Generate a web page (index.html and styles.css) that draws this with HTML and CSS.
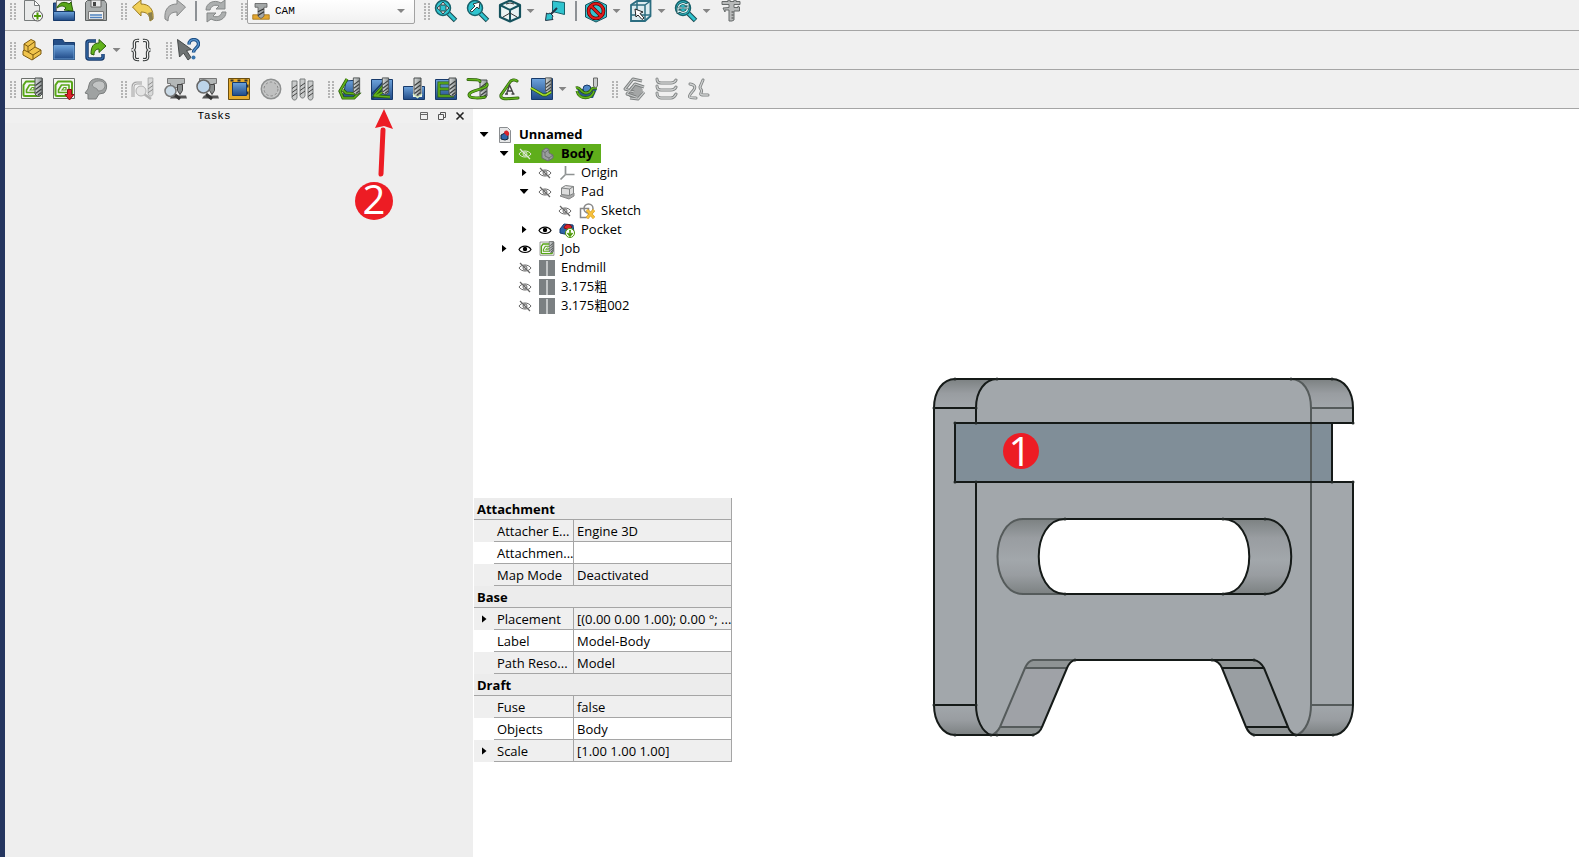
FILE: index.html
```html
<!DOCTYPE html>
<html lang="en">
<head>
<meta charset="utf-8">
<title>Unnamed - CAM</title>
<link rel="stylesheet" href="styles.css">
</head>
<body>
<svg class="defs" aria-hidden="true">
  <defs>
    <linearGradient id="blue" x1="0" y1="0" x2="0" y2="1"><stop offset="0" stop-color="#6da3dc"/><stop offset="1" stop-color="#204a87"/></linearGradient>
    <linearGradient id="steel" x1="0" y1="0" x2="1" y2="0"><stop offset="0" stop-color="#d8dcdc"/><stop offset="1" stop-color="#8f9494"/></linearGradient>
    <linearGradient id="shadeTop" x1="0" y1="0" x2="0" y2="1"><stop offset="0" stop-color="#7c8182"/><stop offset=".5" stop-color="#999da1"/><stop offset="1" stop-color="#a2a7ab"/></linearGradient>
    <linearGradient id="shadeBottom" x1="0" y1="0" x2="0" y2="1"><stop offset="0" stop-color="#a2a7ab"/><stop offset=".5" stop-color="#999da1"/><stop offset="1" stop-color="#7c8182"/></linearGradient>
    <linearGradient id="shadeSlot" x1="0" y1="0" x2="0" y2="1"><stop offset="0" stop-color="#7c8182"/><stop offset=".25" stop-color="#999da1"/><stop offset=".55" stop-color="#a2a7ab"/><stop offset=".75" stop-color="#999da1"/><stop offset="1" stop-color="#7c8182"/></linearGradient>
  </defs>
  <symbol id="mill" viewBox="0 0 9 20">
    <path d="M1 1h7v16l-2 2H3l-2-2z" fill="url(#steel)" stroke="#4a4e4e"/>
    <path d="M1.500 8.500 7.500 4M1.500 12.500 7.500 8M1.500 16.500 7.500 12M4 18l3.500-2.500" stroke="#3c4040" stroke-width="1.200"/>
  </symbol>
  <symbol id="millGray" viewBox="0 0 7 21">
    <path d="M1 1h5v17l-1.500 2h-2L1 18z" fill="#c9cbcb" stroke="#7b7e7e"/>
    <path d="M1 8.500 6 5M1 12.500 6 9M1 16.500 6 13" stroke="#444"/>
  </symbol>
  <symbol id="job" viewBox="0 0 24 24">
    <path d="M1.500 1.500h21v20h-21z" fill="#f4f4f2" stroke="#6c706c"/>
    <path d="M6 4.500h12.500q1.500 0 1.500 1.500v11.500q0 1.500-1.500 1.500H5q-1.500 0-1.500-1.500V8z" fill="none" stroke="#58a618" stroke-width="2" stroke-linejoin="round"/>
    <path d="M9.500 8h7.500v7.500H6.500V13z" fill="none" stroke="#58a618" stroke-width="1.600" stroke-linejoin="round"/>
    <path d="m10 13 2-2.500h2V13z" fill="none" stroke="#58a618" stroke-width="1.200"/>
  </symbol>
  <symbol id="lens" viewBox="0 0 24 24">
    <path d="m14.500 14.500 7 7" stroke="#16474e" stroke-width="5"/>
    <path d="m14.500 14.500 6.500 6.500" stroke="#2fc4cf" stroke-width="3"/>
    <circle cx="9" cy="9" r="7.500" fill="#2fc4cf" stroke="#16616b" stroke-width="1.500"/>
  </symbol>
  <symbol id="scope" viewBox="0 0 24 24">
    <path d="M4.500 1.500h17v5h-3v4h-11v-4h-3z" fill="#b4b8b8" stroke="#777"/>
    <path d="M14.500 7.500h5v6l-2.500 4-2.500-4z" fill="#8a8e8e" stroke="#444"/>
    <path d="M9 18.500h14l1 3H7z" fill="#555"/>
    <path d="m11 17 6 5" stroke="#333" stroke-width="3"/>
  </symbol>
  <symbol id="eye" viewBox="0 0 14 12">
    <path d="M1 6.500C3.500 2 10.500 2 13 6.500 10.500 10.500 3.500 10.500 1 6.500z" fill="#fff" stroke="#000" stroke-width="1.200"/>
    <circle cx="7" cy="6" r="2.200"/>
  </symbol>
  <symbol id="eyeOff" viewBox="0 0 14 12">
    <path d="M1 6C3.500 2 10.500 2 13 6 10.500 10 3.500 10 1 6z" fill="none" stroke="currentColor"/>
    <circle cx="7" cy="6" r="2" fill="none" stroke="currentColor"/>
    <path d="m2 1 10 10" stroke="currentColor" stroke-width="1.200"/>
  </symbol>
  <symbol id="endmill" viewBox="0 0 16 16">
    <path d="M0 0h16v16H0z" fill="#7b8082"/><path d="M7 1h2v15H7z" fill="#c3c6c7"/>
  </symbol>
</svg>

<div class="app">
<header class="toolbars">
  <div class="toolbar">
    <span class="grip"></span>
    <button class="tool" aria-label="New"><svg viewBox="0 0 24 24"><path d="M4.500 1.500h10l5 5v15h-15z" fill="#e9eaea" stroke="#777b7b"/><path d="M14.500 1.500v5h5z" fill="#fff" stroke="#777b7b"/><circle cx="17.500" cy="17" r="5" fill="#f6f6f6" stroke="#555"/><path d="M17.500 13.500v7M14 17h7" stroke="#4e9a06" stroke-width="2"/></svg></button>
    <button class="tool" aria-label="Open"><svg viewBox="0 0 24 24"><path d="M1.500 4h3v17h-3z" fill="#2a5590" stroke="#173a6b"/><path d="M4.500 1.500h15v12h-15z" fill="#eee" stroke="#777"/><path d="M1.500 12.500h21v9h-21z" fill="url(#blue)" stroke="#173a6b"/><path d="M5 9c2-6 8-7 12-4l2-2 2 9-9-1 2-2c-3-3-6-2-9 0z" fill="#58a618" stroke="#2b5d0a"/></svg></button>
    <button class="tool" aria-label="Save"><svg viewBox="0 0 24 24"><path d="M3.500 1.500h17l2 3v17h-21v-18z" fill="#a9adad" stroke="#5d6161"/><path d="M7 1h10v7H7z" fill="#e8e8e8" stroke="#666"/><path d="M9 3h3v4H9z" fill="#444"/><path d="M4.500 12.500h15v8h-15z" fill="#f1f1f1" stroke="#777"/><path d="M6 16h12M6 18.500h12" stroke="#4f82c0" stroke-width="1.500"/></svg></button>
    <span class="grip"></span>
    <button class="tool" aria-label="Undo"><svg viewBox="0 0 24 24"><path d="M1.500 8 10 1v4c8 0 13 5 12 15l-3 2c0-6-3-9-9-9v4z" fill="#f0cf58" stroke="#9b7a20"/><path d="m17 14 2 8 3-2-1-7z" fill="#8b8150"/></svg></button>
    <button class="tool" aria-label="Redo"><svg viewBox="0 0 24 24"><path d="M22.500 8 14 1v4C6 5 1 10 2 20l3 2c0-6 3-9 9-9v4z" fill="#b5b6b6" stroke="#868888"/></svg></button>
    <span class="divider"></span>
    <button class="tool" aria-label="Refresh"><svg viewBox="0 0 24 24"><path d="M2 11C2 4 10 0 17 4l4-3v9h-9l3-3c-4-2-8 0-9 4zM22 13c0 7-8 11-15 7l-4 3v-9h9l-3 3c4 2 8 0 9-4z" fill="#acafaf" stroke="#858888"/></svg></button>
    <span class="grip"></span>
    <div class="combo">
      <svg viewBox="0 0 24 24" aria-hidden="true"><path d="M1 17h22v6H1z" fill="#e3a72f" stroke="#9b6c11"/><path d="M4 2h16v5h-4v12l-4 3-4-3V7H4z" fill="#a4a8a8" stroke="#555"/><path d="m8 13 8-4M8 18l8-5" stroke="#333" stroke-width="1.500"/></svg>
      <select aria-label="Workbench"><option>CAM</option></select>
      <span class="caret"></span>
    </div>
    <span class="grip"></span>
    <button class="tool" aria-label="Fit all"><svg viewBox="0 0 24 24"><use href="#lens"/><path d="m9 3 2.500 3h-5zM9 15l2.500-3h-5zM3 9l3-2.500v5zM15 9l-3-2.500v5z" fill="#fff" stroke="#2a3b3e"/></svg></button>
    <button class="tool" aria-label="Fit selection"><svg viewBox="0 0 24 24"><use href="#lens"/><path d="m4 12 5-5-2-2 7-2-1 7-2-2-5 5z" fill="#fff" stroke="#2a3b3e"/></svg></button>
    <button class="tool" aria-label="Standard view"><svg viewBox="0 0 24 24"><path d="m12 1.500 10 4.500v12l-10 4.500L2 18V6z" fill="#e9f3f3" stroke="#15525d" stroke-width="2.200" stroke-linejoin="round"/><path d="m2 6 10 5 10-5M12 11v11" fill="none" stroke="#15525d" stroke-width="2"/><path d="m5 18 7-4 7 4M8 5l4-1 4 1" fill="none" stroke="#333"/></svg></button>
    <button class="drop" aria-label="Standard view menu"><span class="caret"></span></button>
    <button class="tool" aria-label="Align to selection"><svg viewBox="0 0 24 24"><path d="m9.500 2 12 1.500v12l-12-3z" fill="#2fc4cf" stroke="#16616b"/><path d="m14 9-7 7" stroke="#234" stroke-width="2"/><path d="m3.500 14 1.500 1 2-1 3 3-1 2 1 1.500-7.500 1z" fill="#2fc4cf" stroke="#234"/></svg></button>
    <span class="divider"></span>
    <button class="tool" aria-label="Draw style"><svg viewBox="0 0 24 24"><path d="m12 1 10.500 5v12L12 23 1.500 18V6z" fill="#34c3cf" stroke="#15525d"/><circle cx="12" cy="12" r="7.500" fill="none" stroke="#5a0000" stroke-width="3.600"/><path d="m6.500 6.500 11 11" stroke="#5a0000" stroke-width="3.600"/><circle cx="12" cy="12" r="7.500" fill="none" stroke="#e01c1c" stroke-width="2.200"/><path d="m6.500 6.500 11 11" stroke="#e01c1c" stroke-width="2.200"/></svg></button>
    <button class="drop" aria-label="Draw style menu"><span class="caret"></span></button>
    <button class="tool" aria-label="Selection view"><svg viewBox="0 0 24 24"><path d="m2 6 6-4h13.500v15L16 22H2z" fill="#dcecef" stroke="#2b6d80" stroke-width="1.800"/><path d="M2 6h14v16M16 6l5.500-4M8 2v14H2M8 16h13" fill="none" stroke="#2b6d80" stroke-width="1.500"/><path d="m6 10 8 3-3 1.500 4 4.500-2 1.500-4-4.500-2 2z" fill="#fff" stroke="#222"/></svg></button>
    <button class="drop" aria-label="Selection view menu"><span class="caret"></span></button>
    <button class="tool" aria-label="Zoom"><svg viewBox="0 0 24 24"><use href="#lens"/><path d="M4.500 8c1-4 6-4 7.500-2l2-1v4H9.500M13.500 10c-1 4-6 4-7.500 2l-2 1v-4h4.500" fill="none" stroke="#24484e" stroke-width="2.600"/><path d="M4.500 8c1-4 6-4 7.500-2l2-1v4H9.500M13.500 10c-1 4-6 4-7.500 2l-2 1v-4h4.500" fill="none" stroke="#dff" stroke-width="1.100"/></svg></button>
    <button class="drop" aria-label="Zoom menu"><span class="caret"></span></button>
    <button class="tool" aria-label="Measure"><svg viewBox="0 0 24 24"><path d="M3 2.500h6V1h2v1.500h4V1h2v1.500h4v3h-6v3h4V7l1.500 1v4H15v9l-2 1h-3V11H6v2L4 9l6-.5v-3H3z" fill="#b8baba" stroke="#666a6a"/><path d="M12.500 13h2M12.500 16h2M12.500 19h2" stroke="#444"/></svg></button>
  </div>

  <div class="toolbar">
    <span class="grip"></span>
    <button class="tool" aria-label="Part"><svg viewBox="0 0 24 24"><path d="m4 6 7-4.500 4 2V9l6 3v4l-9 6-9-5v-4l1-1z" fill="#f0c44c" stroke="#7c5a10" stroke-linejoin="round"/><path d="m4 6 4 2.500 7-5M8 8.500V14l-4-2M8 14l5 3 8-5M8 14l7-5M13 17v4.500" fill="none" stroke="#7c5a10"/></svg></button>
    <button class="tool" aria-label="Group"><svg viewBox="0 0 24 24"><path d="M1.500 1.500h9l2 3h10v17h-21z" fill="#254f88" stroke="#173a6b"/><path d="M2 7.500h20v13.500H2z" fill="url(#blue)" stroke="#7fb0e0" stroke-width=".8"/></svg></button>
    <button class="tool" aria-label="Make link"><svg viewBox="0 0 24 24"><path d="M12 3H5Q3 3 3 5v14q0 2 2 2h12q2 0 2-2v-3" fill="none" stroke="#173a6b" stroke-width="3.500"/><path d="M12 3H5Q3 3 3 5v14q0 2 2 2h12q2 0 2-2v-3" fill="none" stroke="#3f79bd"/><path d="M7 16C7 8 10 5 15 5V1.500L22 8l-7 6.500V11c-3 0-5 2-5 6z" fill="#62b31c" stroke="#2b5d0a"/></svg></button>
    <button class="drop" aria-label="Make link menu"><span class="caret"></span></button>
    <button class="tool" aria-label="Macros"><svg viewBox="0 0 24 24"><path d="M10 2.500C5 2 5 4 5.500 8c.3 2.500-1 4-3 4 2 0 3.300 1.500 3 4-.5 4-.5 6 4.500 5.500M14 2.500c5-.5 5 1.500 4.500 5.500-.3 2.500 1 4 3 4-2 0-3.300 1.500-3 4 .5 4 .5 6-4.500 5.500" fill="none" stroke="#383c3c" stroke-width="3.400"/><path d="M10 2.500C5 2 5 4 5.500 8c.3 2.500-1 4-3 4 2 0 3.300 1.500 3 4-.5 4-.5 6 4.500 5.500M14 2.500c5-.5 5 1.500 4.500 5.500-.3 2.500 1 4 3 4-2 0-3.300 1.500-3 4 .5 4 .5 6-4.500 5.500" fill="none" stroke="#f4f4f4" stroke-width="1.200"/></svg></button>
    <span class="grip"></span>
    <button class="tool" aria-label="What's this"><svg viewBox="0 0 24 24"><path d="m1.500 1.500 14 10-5 1 4.500 7-3 2.500-4.500-7-4 4z" fill="#6f7373" stroke="#454949"/><path d="M13 6.500C13 0 22.500 0 22.500 6c0 4-5 4-5 8.500" fill="none" stroke="#1d4f86" stroke-width="3.400"/><path d="M13 6.500C13 0 22.500 0 22.500 6c0 4-5 4-5 8.500" fill="none" stroke="#5b97cf" stroke-width="1.300"/><circle cx="17.500" cy="19.500" r="2" fill="#3874ae"/></svg></button>
  </div>

  <div class="toolbar">
    <span class="grip"></span>
    <button class="tool" aria-label="Job"><svg viewBox="0 0 24 24"><use href="#job"/><use href="#mill" x="14" y="0" width="9" height="20"/></svg></button>
    <button class="tool" aria-label="Post process"><svg viewBox="0 0 24 24"><use href="#job"/><path d="M15.500 12.500h4v5h2.500l-4.500 5.500-4.500-5.500h2.500z" fill="#e0202a" stroke="#8a0f14"/></svg></button>
    <button class="tool" aria-label="Sanity check"><svg viewBox="0 0 24 24"><path d="M5 8C6 2 12 1 16 2c8 1 8 10 4 14l-5 1-3 5H4v-5l-3-1 3-4z" fill="#9fa2a2" stroke="#7a7d7d"/><path d="M8 8c2-5 12-6 13 0 0 5-4 6-7 6-1-4-4-2-6-6z" fill="#c2c4c4" stroke="#868989"/></svg></button>
    <span class="grip"></span>
    <button class="tool faded" aria-label="Inspect"><svg viewBox="0 0 24 24"><path d="M2 20V10q0-4 4-4h5" fill="none" stroke="#777" stroke-width="3"/><path d="M2 20V10q0-4 4-4h5" fill="none" stroke="#ddd"/><use href="#millGray" x="16" y="0" width="7" height="20"/><path d="m13 17 7 5" stroke="#888" stroke-width="2.500"/><circle cx="10" cy="14" r="5" fill="#ddd" stroke="#888"/></svg></button>
    <button class="tool" aria-label="Simulator"><svg viewBox="0 0 24 24"><use href="#scope"/><circle cx="7.500" cy="14" r="5.500" fill="#c9d9e5" stroke="#777" stroke-width="1.500"/></svg></button>
    <button class="tool" aria-label="Legacy simulator"><svg viewBox="0 0 24 24"><use href="#scope"/><circle cx="8.500" cy="9.500" r="6.500" fill="#bcd4ea" stroke="#666" stroke-width="1.500"/></svg></button>
    <button class="tool" aria-label="Select loop"><svg viewBox="0 0 24 24"><path d="M1.500 1.500h21v21h-21z" fill="#e5ab2d" stroke="#6b4f10"/><path d="M3.500 3.500h17v17" fill="none" stroke="#333" stroke-width="2" stroke-dasharray="3 4"/><path d="M5.500 5.500h14v13h-14z" fill="url(#blue)" stroke="#173a6b"/></svg></button>
    <button class="tool" aria-label="Toggle operation"><svg viewBox="0 0 24 24"><circle cx="12" cy="12" r="9.700" fill="#c6c7c7" stroke="#8e9090" stroke-width="1.500"/><circle cx="12" cy="12" r="7" fill="#bfc0c0" stroke="#888" stroke-dasharray="2.500 2"/></svg></button>
    <button class="tool" aria-label="Tool bits"><svg viewBox="0 0 24 24"><use href="#millGray" x="0" y="3" width="7" height="21"/><use href="#millGray" x="8" y="1" width="7" height="21"/><use href="#millGray" x="16" y="3" width="7" height="21"/></svg></button>
    <span class="grip"></span>
    <button class="tool" aria-label="Profile"><svg viewBox="0 0 24 24"><path d="m8 4 12-1v14l-4 4H5z" fill="url(#blue)" stroke="#173a6b"/><path d="M9 2 2 14l3 7h11l4-4-12-1-3-3" fill="none" stroke="#2b5d0a" stroke-width="3.200"/><path d="M9 2 2 14l3 7h11l4-4-12-1-3-3" fill="none" stroke="#62b31c" stroke-width="1.600"/><use href="#mill" x="14" y="0" width="9" height="18"/></svg></button>
    <button class="tool" aria-label="Pocket shape"><svg viewBox="0 0 24 24"><path d="M1.500 2.500h21v20h-21z" fill="url(#blue)" stroke="#173a6b"/><path d="m2 17 12-13M2 22l9-8" stroke="#173a6b" stroke-width="1.500"/><path d="M4 19 13 9v6l-7 4 14 1" fill="none" stroke="#2b5d0a" stroke-width="3"/><path d="M4 19 13 9v6l-7 4 14 1" fill="none" stroke="#62b31c" stroke-width="1.600"/><use href="#mill" x="11" y="0" width="9" height="18"/></svg></button>
    <button class="tool" aria-label="Drilling"><svg viewBox="0 0 24 24"><path d="M1.500 9.500h21v13h-21z" fill="url(#blue)" stroke="#173a6b"/><path d="M11 9h9v11h-9z" fill="#f0f0f0"/><use href="#mill" x="11" y="0" width="9" height="20"/><path d="m11 17 4.500 3.500L20 17" fill="none" stroke="#d9f0c0" stroke-width="1.500"/></svg></button>
    <button class="tool" aria-label="Face mill"><svg viewBox="0 0 24 24"><path d="M1.500 2.500h21v20h-21z" fill="url(#blue)" stroke="#173a6b"/><path d="M18 6H5v6h12v0H5v7h15" fill="none" stroke="#2b5d0a" stroke-width="3"/><path d="M18 6H5v6h12v0H5v7h15" fill="none" stroke="#62b31c" stroke-width="1.500"/><use href="#mill" x="14" y="0" width="9" height="20"/></svg></button>
    <button class="tool" aria-label="Helix"><svg viewBox="0 0 24 24"><use href="#mill" x="13" y="2" width="9" height="20"/><path d="M2 2.500c6 0 12 0 12 2M21 7c2 5-18 6-18 11 0 4 12 3 16 2" fill="none" stroke="#2b5d0a" stroke-width="3" stroke-linecap="round"/><path d="M2 2.500c6 0 12 0 12 2M21 7c2 5-18 6-18 11 0 4 12 3 16 2" fill="none" stroke="#62b31c" stroke-width="1.600" stroke-linecap="round"/></svg></button>
    <button class="tool" aria-label="Engrave"><svg viewBox="0 0 24 24"><path d="M19 4c-2-2-6-1-7 1L3 18c-1 4 4 4 10 3.500l7-.500" fill="none" stroke="#2b5d0a" stroke-width="3" stroke-linecap="round"/><path d="M19 4c-2-2-6-1-7 1L3 18c-1 4 4 4 10 3.500l7-.500" fill="none" stroke="#62b31c" stroke-width="1.600" stroke-linecap="round"/><path d="m8.500 17 3-9 4 9M10 14h4M7 17h3M13.500 17h3" fill="none" stroke="#444" stroke-width="1.400"/></svg></button>
    <button class="tool" aria-label="Deburr"><svg viewBox="0 0 24 24"><path d="M1.500 1.500h21v21h-21z" fill="url(#blue)" stroke="#173a6b"/><use href="#mill" x="14" y="0" width="9" height="17"/><path d="m1 11 12 7h3l5-3" fill="none" stroke="#2b5d0a" stroke-width="3"/><path d="m1 11 12 7h3l5-3" fill="none" stroke="#a7dd2c" stroke-width="1.600"/></svg></button>
    <button class="drop" aria-label="Deburr menu"><span class="caret"></span></button>
    <button class="tool" aria-label="3D pocket"><svg viewBox="0 0 24 24"><path d="M2 12h20l-4 9H7z" fill="#2b5792"/><circle cx="12" cy="12" r="4" fill="#4d86c6" stroke="#173a6b"/><path d="M1 11c5-2 4 5 10 5s4-5 8-5h3M2 14c2 9 15 9 17 0" fill="none" stroke="#2b5d0a" stroke-width="3"/><path d="M1 11c5-2 4 5 10 5s4-5 8-5h3M2 14c2 9 15 9 17 0" fill="none" stroke="#62b31c" stroke-width="1.500"/><path d="M18.500 1h4v8l-2 2-2-2z" fill="#c9cccc" stroke="#666"/></svg></button>
    <span class="grip"></span>
    <button class="tool" aria-label="Operation copy"><svg viewBox="0 0 24 24"><path d="m8 10 9-3 4 6-4 7H7z" fill="#a4a6a6"/><path d="m20 4-9-2-8 10 9 3M22 10l-9-3-8 10 9 3M22 15l-6 7-8-1" fill="none" stroke="#7d8080" stroke-width="3" stroke-linejoin="round"/><path d="m20 4-9-2-8 10 9 3M22 10l-9-3-8 10 9 3M22 15l-6 7-8-1" fill="none" stroke="#c9cbcb" stroke-width="1.200" stroke-linejoin="round"/></svg></button>
    <button class="tool" aria-label="Array"><svg viewBox="0 0 24 24"><path d="M3 2c0 3 2 4 4 4h10c3 0 4-1 5-3M3 9c0 3 2 4 4 4h10c3 0 4-1 5-3M3 16c0 3 2 5 4 5h10c3 0 4-2 5-4" fill="none" stroke="#7d8080" stroke-width="3" stroke-linecap="round"/><path d="M3 2c0 3 2 4 4 4h10c3 0 4-1 5-3M3 9c0 3 2 4 4 4h10c3 0 4-1 5-3M3 16c0 3 2 5 4 5h10c3 0 4-2 5-4" fill="none" stroke="#cfd1d1" stroke-width="1.300" stroke-linecap="round"/></svg></button>
    <button class="tool" aria-label="Simple copy"><svg viewBox="0 0 24 24"><path d="M4 7c6 1 6 4 2 8-4 5-4 6 4 6M17 3l-3 7c0 3 3 2 1 6-1 2 0 2 7 2" fill="none" stroke="#7d8080" stroke-width="3" stroke-linecap="round"/><path d="M4 7c6 1 6 4 2 8-4 5-4 6 4 6M17 3l-3 7c0 3 3 2 1 6-1 2 0 2 7 2" fill="none" stroke="#cfd1d1" stroke-width="1.300" stroke-linecap="round"/></svg></button>
  </div>
</header>

<main class="work">
  <section class="tasks" aria-label="Tasks">
    <div class="tasks-bar">
      <h2>Tasks</h2>
      <button aria-label="Collapse"><svg viewBox="0 0 10 10"><path d="M1.500 1.500h7v7h-7zM1.500 3.500h7" fill="none" stroke="#666"/></svg></button>
      <button aria-label="Float"><svg viewBox="0 0 10 10"><path d="M3.500 3.500v-2h5v5h-2M1.500 3.500h5v5h-5z" fill="none" stroke="#555"/></svg></button>
      <button aria-label="Close"><svg viewBox="0 0 10 10"><path d="m1.500 1.500 7 7M8.500 1.500l-7 7" stroke="#222" stroke-width="1.600"/></svg></button>
    </div>
    <svg class="pointer" viewBox="0 0 44 124" role="img" aria-label="Step 2">
      <path d="m27 65 2-44" stroke="#ed1c24" stroke-width="5" stroke-linecap="round"/>
      <path d="m30 0 9 20-9-3-9 2z" fill="#ed1c24"/>
      <circle cx="20" cy="92" r="19" fill="#ed1c24"/>
      <text class="step" x="20" y="105">2</text>
    </svg>
  </section>

  <section class="side" aria-label="Model">
    <ul class="tree">
      <li class="row d0"><button class="twist open" aria-label="Collapse"></button><svg class="kind" viewBox="0 0 16 16"><path d="M2.500.5h8l3 3v12h-11z" fill="#e6e7e8" stroke="#8a8d90"/><path d="m4 8 4-2 3 2v4l-3 1-4-1z" fill="#2d65a8" stroke="#123"/><path d="M7 6c0-4 6-3 5 2l-2 1z" fill="#d8232a"/></svg><b>Unnamed</b></li>
      <li class="row d1"><button class="twist open" aria-label="Collapse"></button><span class="chosen"><svg class="eye"><use href="#eyeOff"/></svg><svg class="kind" viewBox="0 0 16 16"><path d="m3 5 4-3 3 1.500V7l4 2v3l-5 3-6-3z" fill="#9a9e9e" stroke="#6a6e6e"/><path d="m3 5 3 1.500 4-3M6 6.500V10l4 2 4-3M10 12v2" fill="none" stroke="#6c7070"/></svg><b>Body</b></span></li>
      <li class="row d2"><button class="twist" aria-label="Expand"></button><svg class="eye"><use href="#eyeOff"/></svg><svg class="kind" viewBox="0 0 16 16"><path d="M6.500 1v8M6.500 9.500h9M6.500 9.500l-5 5" fill="none" stroke="#8e9292" stroke-width="1.700"/></svg>Origin</li>
      <li class="row d2"><button class="twist open" aria-label="Collapse"></button><svg class="eye"><use href="#eyeOff"/></svg><svg class="kind" viewBox="0 0 16 16"><path d="m1 12 3-3h11v3l-5 3z" fill="#aaa" stroke="#888"/><path d="m2.500 4 4-2.500 8 1v7l-4 2-8-1z" fill="#ddd" stroke="#7f8282"/><path d="m2.500 4 8 1 4-2.500M10.500 5v6" fill="none" stroke="#7f8282"/></svg>Pad</li>
      <li class="row d3"><span class="twist none"></span><svg class="eye"><use href="#eyeOff"/></svg><svg class="kind" viewBox="0 0 16 16"><path d="M1.500 5.500h8v9h-8z" fill="none" stroke="#888" stroke-width="1.500"/><circle cx="9.500" cy="5.500" r="4.500" fill="none" stroke="#888" stroke-width="1.500"/><path d="m8 7 7 8M15 7l-7 8" stroke="#d39a18" stroke-width="3"/><path d="m8 7 7 8M15 7l-7 8" stroke="#f7c13d" stroke-width="2"/></svg>Sketch</li>
      <li class="row d2"><button class="twist" aria-label="Expand"></button><svg class="eye"><use href="#eye"/></svg><svg class="kind" viewBox="0 0 16 16"><path d="m1 7 4-5 9 1 1 8-5 2-9-2z" fill="#2d65a8" stroke="#17386a"/><path d="M5 6c0-4 6-5 8-1l-3 3z" fill="#d8232a" stroke="#7b1014"/><circle cx="11" cy="11" r="4.500" fill="#fff" stroke="#4e9a06"/><path d="M11 8v5M8.500 11l2.500 3 2.500-3" fill="none" stroke="#4e9a06" stroke-width="1.600"/></svg>Pocket</li>
      <li class="row d1"><button class="twist" aria-label="Expand"></button><svg class="eye"><use href="#eye"/></svg><svg class="kind" viewBox="0 0 24 24"><use href="#job"/><use href="#mill" x="14" y="0" width="9" height="18"/></svg>Job</li>
      <li class="row d1"><span class="twist none"></span><svg class="eye"><use href="#eyeOff"/></svg><svg class="kind"><use href="#endmill"/></svg>Endmill</li>
      <li class="row d1"><span class="twist none"></span><svg class="eye"><use href="#eyeOff"/></svg><svg class="kind"><use href="#endmill"/></svg>3.175粗</li>
      <li class="row d1"><span class="twist none"></span><svg class="eye"><use href="#eyeOff"/></svg><svg class="kind"><use href="#endmill"/></svg>3.175粗002</li>
    </ul>

    <table class="props">
      <colgroup><col class="c-twist"><col class="c-name"><col></colgroup>
      <tbody>
        <tr><th class="group" colspan="3">Attachment</th></tr>
        <tr><td></td><th>Attacher E...</th><td>Engine 3D</td></tr>
        <tr class="light"><td></td><th>Attachmen...</th><td></td></tr>
        <tr><td></td><th>Map Mode</th><td>Deactivated</td></tr>
        <tr><th class="group" colspan="3">Base</th></tr>
        <tr><td><button class="twist" aria-label="Expand Placement"></button></td><th>Placement</th><td>[(0.00 0.00 1.00); 0.00 °; ...</td></tr>
        <tr class="light"><td></td><th>Label</th><td>Model-Body</td></tr>
        <tr><td></td><th>Path Reso...</th><td>Model</td></tr>
        <tr><th class="group" colspan="3">Draft</th></tr>
        <tr><td></td><th>Fuse</th><td>false</td></tr>
        <tr class="light"><td></td><th>Objects</th><td>Body</td></tr>
        <tr><td><button class="twist" aria-label="Expand Scale"></button></td><th>Scale</th><td>[1.00 1.00 1.00]</td></tr>
      </tbody>
    </table>
  </section>

  <section class="scene" aria-label="3D view">
    <svg viewBox="732 109 847 748" role="img" aria-label="Stool model">
      <path fill="#a2a7ab" fill-rule="evenodd" d="M955 379H1332Q1353 383 1353 408V423H1332V482H1353V705Q1353 731 1333 735H1254Q1248 734 1246 727L1222 668Q1219 660 1212 660H1075Q1070 660 1067 668L1042 727Q1040 733 1033 735H955Q934 731 934 705V408Q934 383 955 379zM1065 519C1030 519 1030 594 1065 594H1223C1258 594 1258 519 1223 519z"/>
      <path fill="url(#shadeTop)" d="M934 408C934 391 943 379 955 379H997C985 379 976 391 976 408zM1291 379H1332C1344 379 1353 391 1353 408H1311C1311 391 1303 379 1291 379z"/>
      <path fill="url(#shadeBottom)" d="M934 705C934 722 943 735 955 735H991C982 732 976 719 976 705zM1311 705C1311 719 1306 731 1297 735H1333C1344 735 1353 722 1353 705z"/>
      <path fill="url(#shadeSlot)" d="M1023 519C989 519 989 594 1023 594H1065C1030 594 1030 519 1065 519zM1223 519C1258 519 1258 594 1223 594H1265C1300 594 1300 519 1265 519z"/>
      <path fill="#9fa2a7" d="M1025 668H1067L1042 727H1000z"/>
      <path fill="#999ea2" d="M1222 668H1264L1288 727H1246z"/>
      <path fill="#8e9394" d="M1033 660H1075Q1070 661 1067 668H1025Q1028 661 1033 660zM1212 660H1254Q1260 661 1264 668H1222Q1219 661 1212 660zM1000 727H1042Q1040 733 1033 735H992zM1246 727H1288L1296 735H1254Q1249 734 1246 727z"/>
      <path fill="#808e98" d="M955 423H1332V482H955z"/>
      <g fill="none" stroke="#555b5b" stroke-width="2">
        <path d="M1291 379C1303 379 1311 391 1311 408V705C1311 719 1306 731 1297 735M1311 408H1353M1311 705H1353"/>
        <path d="M1065 519H1023C989 519 989 594 1023 594H1065"/>
        <path d="M1075 660H1033Q1028 661 1025 668L1000 727Q997 733 992 735M1025 668H1067M1000 727H1042"/>
      </g>
      <g fill="none" stroke="#151a18" stroke-width="2" stroke-linejoin="round">
        <path d="M1353 423V408C1353 391 1344 379 1332 379H955C943 379 934 391 934 408V705C934 722 943 735 955 735H1033Q1040 733 1042 727L1067 668Q1070 661 1075 660H1212Q1219 661 1222 668L1246 727Q1249 734 1254 735H1333C1344 735 1353 722 1353 705V482H955V423H1353M1332 423V482"/>
        <path d="M934 408H976M997 379C985 379 976 391 976 408V423M976 482V705C976 719 982 732 991 735M934 705H976"/>
        <path d="M1065 519C1030 519 1030 594 1065 594H1265C1300 594 1300 519 1265 519zM1223 519C1258 519 1258 594 1223 594"/>
        <path d="M1212 660H1254Q1260 661 1264 668L1288 727Q1290 733 1296 735M1222 668H1264M1246 727H1288"/>
      </g>
      <g fill="none" stroke="#202624" stroke-width="3" stroke-linecap="round">
        <path d="M955 379h0M997 379h0M1291 379h0M1332 379h0M934 408h0M976 408h0M955 423h0M976 423h0M955 482h0M976 482h0M1353 423h0M1353 482h0M1332 482h0M1065 519h0M1065 594h0M1223 519h0M1223 594h0M1265 519h0M1265 594h0M1075 660h0M1212 660h0M1254 660h0M934 705h0M976 705h0M955 735h0M991 735h0M997 735h0M1033 735h0M1254 735h0M1296 735h0M1333 735h0"/>
      </g>
      <circle cx="1021" cy="451" r="18" fill="#ed1c24"/>
      <text class="step" x="1020" y="466">1</text>
    </svg>
  </section>
</main>
</div>
</body>
</html>
```

FILE: styles.css
```css
* { box-sizing: border-box; }

body {
  margin: 0;
  font: 13px/19px "Open Sans", "Noto Sans CJK SC", sans-serif;
  color: #000;
  background: #fff;
  overflow: hidden;
}

.defs { position: absolute; width: 0; height: 0; }

button {
  margin: 0;
  padding: 0;
  border: 0;
  background: none;
  color: inherit;
}

.app {
  display: flex;
  flex-direction: column;
  min-height: 100vh;
  border-left: 5px solid #24355f;
}

/* Toolbars */
.toolbars { background: #f0f0f0; margin-top: -8px; }

.toolbar {
  display: flex;
  align-items: center;
  height: 39px;
  padding-left: 5px;
  border-bottom: 1px solid #a5a5a5;
}

.grip {
  flex: none;
  width: 6px;
  height: 17px;
  margin-left: 9px;
  background: radial-gradient(circle at 1px 1px, #b4b4b4 1px, transparent 1px) 0 0 / 4px 3px;
}

.grip:first-child { margin-left: 0; }

.tool {
  flex: none;
  display: grid;
  place-items: center;
  width: 32px;
  height: 32px;
}

.tool svg { width: 24px; height: 24px; }
.faded { opacity: .6; }

.drop {
  flex: none;
  display: grid;
  place-items: center;
  width: 13px;
  height: 32px;
  padding-right: 4px;
}

.caret {
  width: 8px;
  height: 4px;
  background: #858585;
  clip-path: polygon(0 0, 100% 0, 50% 100%);
}

.divider {
  flex: none;
  width: 2px;
  height: 20px;
  margin: 0 3px 0 4px;
  background: #8d9195;
}

.combo {
  position: relative;
  display: flex;
  align-items: center;
  width: 168px;
  height: 26px;
  border: 1px solid #a2a2a2;
  border-radius: 2px;
  background: linear-gradient(#fff, #f1f1f1);
}

.combo svg { position: absolute; left: 4px; width: 18px; height: 18px; pointer-events: none; }
.combo .caret { position: absolute; right: 9px; pointer-events: none; }

.combo select {
  width: 100%;
  height: 100%;
  padding: 0 0 0 27px;
  border: 0;
  appearance: none;
  background: none;
  color: #000;
  font: 11px "Liberation Mono", monospace;
}

/* Work area */
.work {
  flex: 1;
  display: grid;
  grid-template-columns: 468px 259px minmax(0, 1fr);
}

.tasks { position: relative; background: #eee; }

.tasks-bar {
  display: flex;
  align-items: center;
  height: 14px;
  padding: 0 4px 0 8px;
  background: #f0f0f0;
}

.tasks-bar h2 {
  flex: 1;
  margin: 0;
  text-align: center;
  font: 11px/16px "Liberation Mono", monospace;
}

.tasks-bar button {
  display: grid;
  place-items: center;
  width: 18px;
  height: 14px;
}

.tasks-bar svg { width: 10px; height: 10px; }

.pointer {
  position: absolute;
  top: 0;
  left: 349px;
  width: 44px;
  height: 124px;
}

.step {
  font: 40px/40px "Open Sans", sans-serif;
  fill: #fff;
  text-anchor: middle;
}

/* Model tree */
.side {
  display: grid;
  grid-template-rows: 389px auto;
  align-content: start;
  padding-left: 1px;
}

.tree { margin: 0; padding: 16px 0 0; list-style: none; }

.row {
  display: flex;
  align-items: center;
  height: 19px;
  white-space: nowrap;
}

.d1 { padding-left: 20px; }
.d2 { padding-left: 40px; }
.d3 { padding-left: 60px; }

.twist {
  flex: none;
  width: 20px;
  height: 19px;
}

.twist::before {
  content: "";
  display: block;
  width: 5px;
  height: 8px;
  margin: 0 auto;
  background: #000;
  clip-path: polygon(0 0, 100% 50%, 0 100%);
}

.twist.open::before {
  width: 9px;
  height: 5px;
  clip-path: polygon(0 0, 100% 0, 50% 100%);
}

.twist.none::before { content: none; }

.eye {
  flex: none;
  width: 14px;
  height: 12px;
  margin: 0 7px 0 4px;
  color: #666;
}

.kind {
  flex: none;
  width: 16px;
  height: 16px;
  margin-right: 6px;
}

.d0 .kind { margin-left: 3px; }

.chosen {
  display: flex;
  align-items: center;
  height: 19px;
  padding-right: 8px;
  background: #5fae1b;
}

.chosen .eye { color: #dfe8d8; }

/* Property table */
.props {
  width: 258px;
  table-layout: fixed;
  border-collapse: separate;
  border-spacing: 0;
  border-right: 1px solid #a5a5a5;
  background: #efefef;
}

.c-twist { width: 20px; }
.c-name { width: 80px; }

.props th,
.props td {
  height: 22px;
  padding: 1px 0 0 3px;
  border-bottom: 1px solid #a5a5a5;
  text-align: left;
  font-weight: 400;
  white-space: nowrap;
  line-height: 20px;
}

.props th { border-right: 1px solid #a5a5a5; }
.props td:first-child { padding: 0; border-bottom: 0; }
.props .group { border-right: 0; background: #ececec; font-weight: 700; }
.props .light { background: #fff; }
.props .twist { display: block; }

/* 3D view */
.scene { min-width: 0; }
.scene svg { display: block; width: 100%; height: 100%; }
```
